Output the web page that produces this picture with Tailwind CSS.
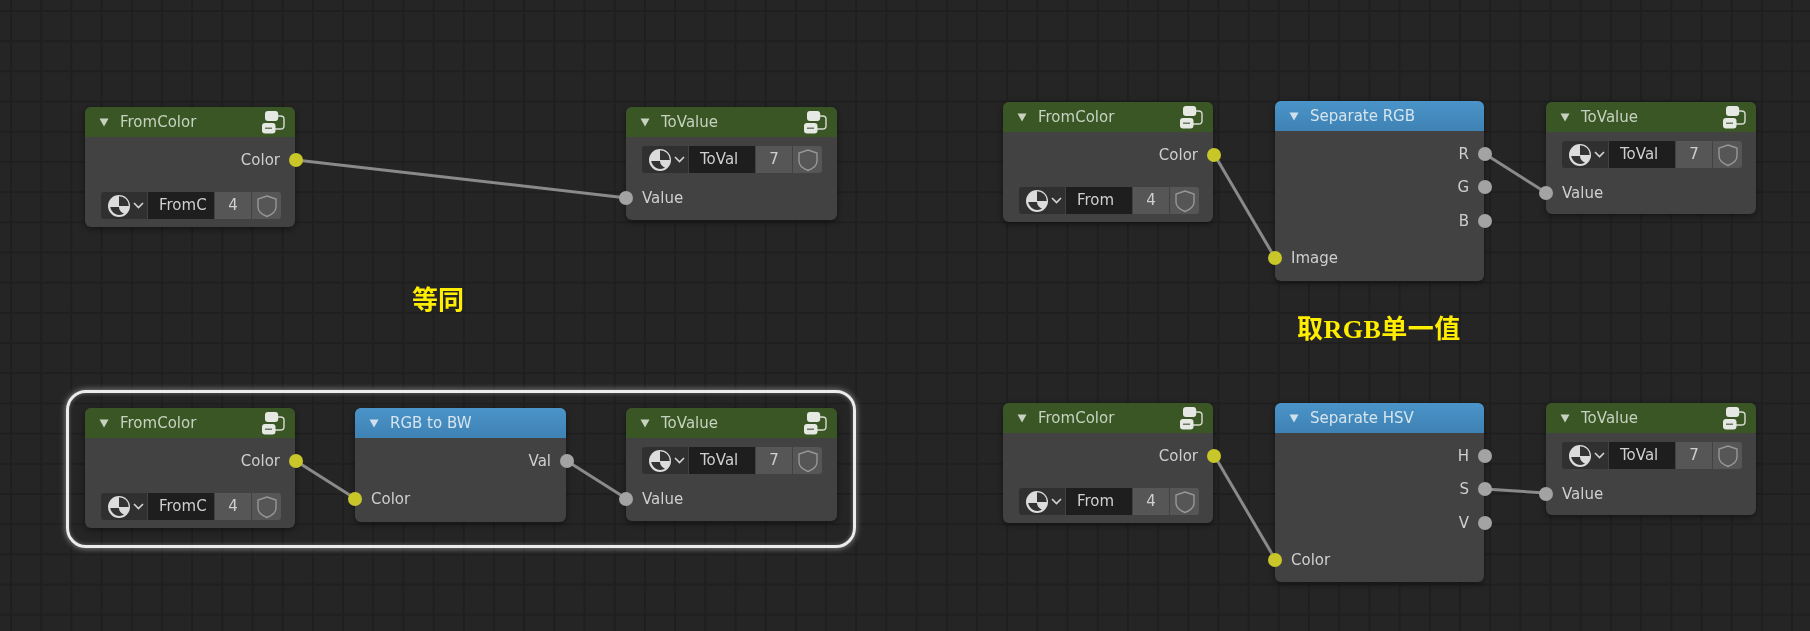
<!DOCTYPE html>
<html lang="en">
<head>
  <meta charset="UTF-8">
  <title>Node Editor</title>
  <script src="https://cdn.jsdelivr.net/npm/@tailwindcss/browser@4"></script>
</head>

<body class="bg-[#252525]">
  <!-- Node canvas -->
  <div id="canvas" class="relative w-[1810px] h-[631px] overflow-hidden bg-[#252525] bg-[image:linear-gradient(#1f1f1f_2px,transparent_2px),linear-gradient(90deg,#1f1f1f_2px,transparent_2px)] bg-size-[30.2px_30.2px] bg-position-[10px_10px] font-['DejaVu_Sans',sans-serif] text-[15px] text-[#cfcfcf] blur-[0.6px]">
    <svg id="wires" class="absolute inset-0" width="1810" height="631" fill="none" stroke="#8a8a8a" stroke-width="3"></svg>

    <!-- Highlight frame -->
    <div class="absolute left-[66px] top-[390px] w-[790px] h-[158px] rounded-[20px] border-[3px] border-[#ececec] shadow-[0_0_6px_rgba(255,255,255,0.5),inset_0_0_4px_rgba(255,255,255,0.35)]"></div>

    <!-- Labels -->
    <div class="absolute left-[412px] top-[284px] font-['Liberation_Serif','Noto_Sans_CJK_SC',serif] font-bold text-[26px] leading-[34px] text-[#ffee00]">等同</div>
    <div class="absolute left-[1297px] top-[313px] font-['Liberation_Serif','Noto_Sans_CJK_SC',serif] font-bold text-[26px] leading-[34px] tracking-[0.5px] text-[#ffee00]">取RGB单一值</div>
  </div>

  <script>
    const canvas = document.getElementById('canvas');
    const wires = document.getElementById('wires');

    const triangle = (color) => `<svg width="10" height="9" viewBox="0 0 10 9"><path d="M0.5 0.5h9L5 8.500z" fill="${color}"/></svg>`;

    const groupIcon = `<svg width="23" height="24" viewBox="0 0 23 24" fill="none">
      <path d="M15 6h3.500q3.500 0 3.500 3v7q0 3-3.500 3H13" stroke="#d8ddd4" stroke-width="1.4"/>
      <rect x="3" y="1" width="13.200" height="10" rx="3" fill="#e6e9e3"/>
      <rect x="0" y="13" width="13.500" height="10.500" rx="3" fill="#e6e9e3"/>
      <rect x="3" y="17.500" width="7" height="1.500" fill="#6b7a60"/>
    </svg>`;

    const sphereIcon = `<svg width="24" height="24" viewBox="0 0 24 24">
      <circle cx="12" cy="12" r="11" fill="#dcdcdc"/>
      <path d="M12 2.200A9.800 9.800 0 0 1 21.800 12H12z" fill="#333"/>
      <path d="M3.200 13H12C12 16 14 18.500 17 19.800A9.500 9.500 0 0 1 3.200 13z" fill="#333"/>
    </svg>`;

    const chevron = `<svg width="11" height="7" viewBox="0 0 11 7" fill="none"><path d="M1 1l4.500 4.500L10 1" stroke="#d4d4d4" stroke-width="1.600"/></svg>`;

    const shield = `<svg width="22" height="24" viewBox="0 0 22 24" fill="none"><path d="M11 2l9 3v8c0 4.500-4 7.500-9 9.500-5-2-9-5-9-9.500V5z" stroke="#979797" stroke-width="1.400"/></svg>`;

    // Socket dot hanging over the node edge
    const socket = (side, color) => {
      const place = side === 'out' ? '-right-[8px]' : '-left-[7px]';
      const fill = color === 'y' ? 'bg-[#c9c62a]' : 'bg-[#a3a3a3]';
      return `<span class="absolute top-1/2 -translate-y-1/2 ${place} w-[14px] h-[14px] rounded-full ${fill}"></span>`;
    };

    const outRow = (label, color, height) => `
      <div class="relative flex items-center justify-end pr-[15px]" style="height:${height}px">
        <span>${label}</span>${socket('out', color)}
      </div>`;

    const inRow = (label, color, height) => `
      <div class="relative flex items-center pl-[16px]" style="height:${height}px">
        ${socket('in', color)}<span>${label}</span>
      </div>`;

    const widget = (name, num) => `
      <div class="flex h-[27px] ml-[16px] gap-px">
        <div class="flex items-center justify-between w-[46px] pl-[6px] pr-[3px] rounded-l-[3px] bg-[#303030]">${sphereIcon}${chevron}</div>
        <div class="flex items-center w-[66px] pl-[11px] bg-[#1e1e1e]">${name}</div>
        <div class="flex items-center justify-center w-[36px] bg-[#565656]">${num}</div>
        <div class="flex items-center justify-center w-[29px] rounded-r-[3px] bg-[#565656]">${shield}</div>
      </div>`;

    const header = (title, kind) => {
      const bg = kind === 'group'
        ? 'bg-[#3a5625] text-[#c6d2bf]'
        : 'bg-gradient-to-b from-[#4a94c9] to-[#3f82b4] text-[#d6e4ee]';
      return `
      <div class="flex items-center h-[30px] pl-[14px] pr-[10px] rounded-t-[6px] ${bg}">
        ${triangle(kind === 'group' ? '#c6d2bf' : '#cfe0ec')}
        <span class="ml-[11px] flex-1 pt-[1px]">${title}</span>
        ${kind === 'group' ? groupIcon : ''}
      </div>`;
    };

    const fromColor = (name) => header('FromColor', 'group') + outRow('Color', 'y', 46) + '<div class="h-[9px]"></div>' + widget(name, 4);
    const toValue = () => header('ToValue', 'group') + '<div class="h-[9px]"></div>' + widget('ToVal', 7) + inRow('Value', 'g', 50);
    const separate = (title, outs, input) => header(title, 'math')
      + '<div class="h-[6px]"></div>' + outs.map((o) => outRow(o, 'g', 33.5)).join('')
      + inRow(input, 'y', 41);
    const rgbToBw = () => header('RGB to BW', 'math') + outRow('Val', 'g', 46) + inRow('Color', 'y', 30);

    const nodes = [
      { x: 85, y: 107, w: 210, h: 120, html: fromColor('FromC') },
      { x: 626, y: 107, w: 211, h: 113, html: toValue() },
      { x: 85, y: 408, w: 210, h: 120, html: fromColor('FromC') },
      { x: 355, y: 408, w: 211, h: 114, html: rgbToBw() },
      { x: 626, y: 408, w: 211, h: 113, html: toValue() },
      { x: 1003, y: 102, w: 210, h: 120, html: fromColor('From') },
      { x: 1275, y: 101, w: 209, h: 180, html: separate('Separate RGB', ['R', 'G', 'B'], 'Image') },
      { x: 1546, y: 102, w: 210, h: 112, html: toValue() },
      { x: 1003, y: 403, w: 210, h: 120, html: fromColor('From') },
      { x: 1275, y: 403, w: 209, h: 179, html: separate('Separate HSV', ['H', 'S', 'V'], 'Color') },
      { x: 1546, y: 403, w: 210, h: 112, html: toValue() },
    ];

    nodes.forEach((n) => {
      const el = document.createElement('div');
      el.className = 'absolute rounded-[6px] bg-[#424242] shadow-[0_2px_6px_rgba(0,0,0,0.45)]';
      el.style.cssText = `left:${n.x}px;top:${n.y}px;width:${n.w}px;height:${n.h}px`;
      el.innerHTML = n.html;
      canvas.appendChild(el);
    });

    const links = [
      [296, 160, 627, 198],
      [296, 461, 356, 499],
      [567, 461, 627, 499],
      [1214, 154, 1275, 258],
      [1485, 154, 1545, 192],
      [1214, 455, 1275, 559],
      [1485, 489, 1545, 493],
    ];

    wires.innerHTML = links.map(([x1, y1, x2, y2]) => `<line x1="${x1}" y1="${y1}" x2="${x2}" y2="${y2}"/>`).join('');
  </script>
</body>
</html>
